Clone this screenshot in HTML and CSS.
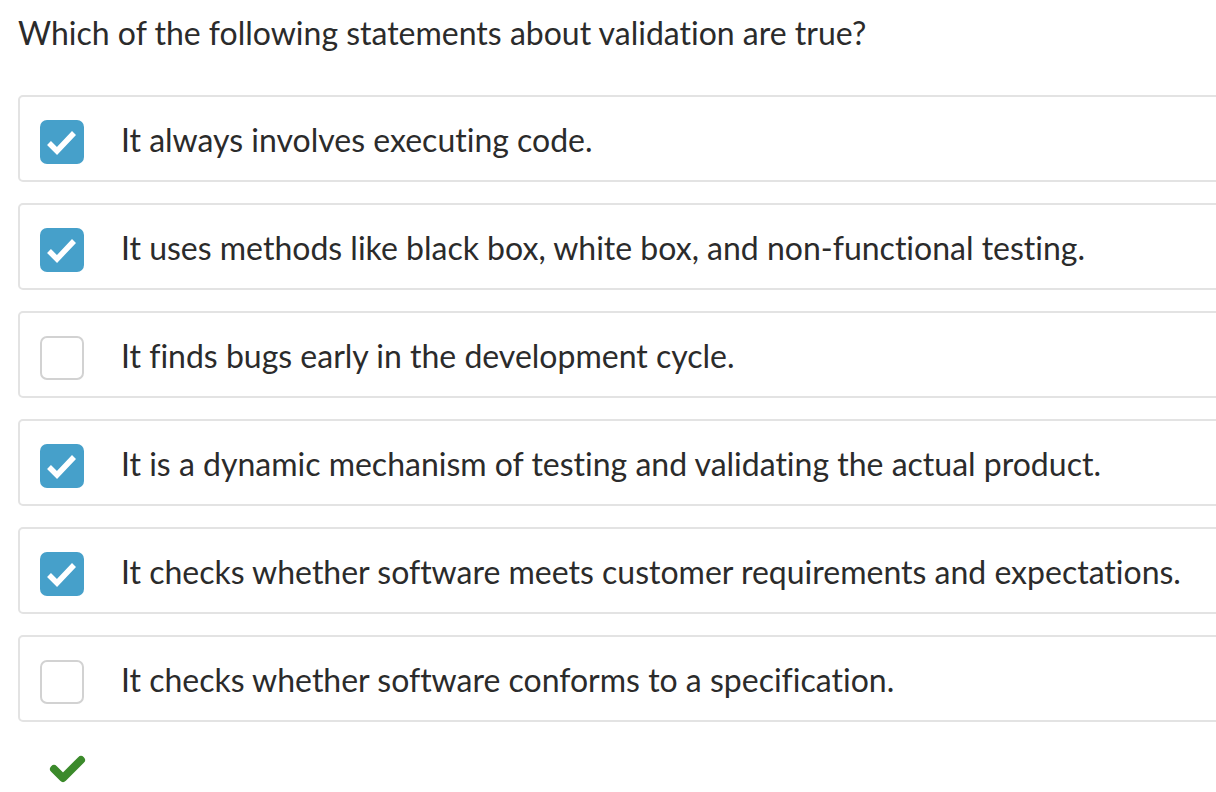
FILE: index.html
```html
<!DOCTYPE html>
<html lang="en">
<head>
<meta charset="utf-8">
<title>Quiz</title>
<link rel="stylesheet" href="styles.css">
</head>
<body>
<main class="question">
  <h1 class="prompt">Which of the following statements about validation are true?</h1>
  <ul class="options">
    <li class="option">
      <span class="box checked"><svg viewBox="0 0 44 44" width="44" height="44"><polyline points="9,23 17,31 34,13" /></svg></span>
      <span class="label">It always involves executing code.</span>
    </li>
    <li class="option">
      <span class="box checked"><svg viewBox="0 0 44 44" width="44" height="44"><polyline points="9,23 17,31 34,13" /></svg></span>
      <span class="label">It uses methods like black box, white box, and non-functional testing.</span>
    </li>
    <li class="option">
      <span class="box"></span>
      <span class="label">It finds bugs early in the development cycle.</span>
    </li>
    <li class="option">
      <span class="box checked"><svg viewBox="0 0 44 44" width="44" height="44"><polyline points="9,23 17,31 34,13" /></svg></span>
      <span class="label">It is a dynamic mechanism of testing and validating the actual product.</span>
    </li>
    <li class="option">
      <span class="box checked"><svg viewBox="0 0 44 44" width="44" height="44"><polyline points="9,23 17,31 34,13" /></svg></span>
      <span class="label">It checks whether software meets customer requirements and expectations.</span>
    </li>
    <li class="option">
      <span class="box"></span>
      <span class="label">It checks whether software conforms to a specification.</span>
    </li>
  </ul>
  <div class="result">
    <svg viewBox="0 0 40 32" width="40" height="32"><polyline points="6,15 15,24 33,6" /></svg>
  </div>
</main>
</body>
</html>
```
FILE: styles.css
```css
html, body {
  margin: 0;
  padding: 0;
  background: #ffffff;
  overflow: hidden;
}
body {
  font-family: "Lato", "Open Sans", sans-serif;
  color: #2b2b2b;
  font-variant-ligatures: none;
}
.question {
  padding: 0 0 0 18px;
  width: 1240px;
}
.prompt {
  margin: 0;
  padding-top: 13px;
  height: 95px;
  box-sizing: border-box;
  font-size: 32px;
  line-height: 40px;
  font-weight: 400;
}
.options {
  list-style: none;
  margin: 0;
  padding: 0;
  display: flex;
  flex-direction: column;
  gap: 21px;
}
.option {
  display: flex;
  align-items: flex-start;
  height: 87px;
  box-sizing: border-box;
  border: 2px solid #e3e3e3;
  border-radius: 5px;
  padding: 23px 0 0 20px;
}
.box {
  flex: none;
  width: 44px;
  height: 44px;
  box-sizing: border-box;
  border: 2px solid #d2d2d2;
  border-radius: 7px;
  background: #fff;
}
.box.checked {
  border: none;
  background: #46a0ca;
}
.box svg {
  display: block;
}
.box polyline {
  fill: none;
  stroke: #ffffff;
  stroke-width: 5.5;
  stroke-linecap: butt;
  stroke-linejoin: miter;
}
.label {
  margin-left: 37px;
  font-size: 32px;
  line-height: 40px;
  white-space: nowrap;
}
.result {
  padding: 32px 0 0 30px;
}
.result svg {
  display: block;
}
.result polyline {
  fill: none;
  stroke: #3b8a2b;
  stroke-width: 8;
  stroke-linecap: round;
  stroke-linejoin: round;
}
```
